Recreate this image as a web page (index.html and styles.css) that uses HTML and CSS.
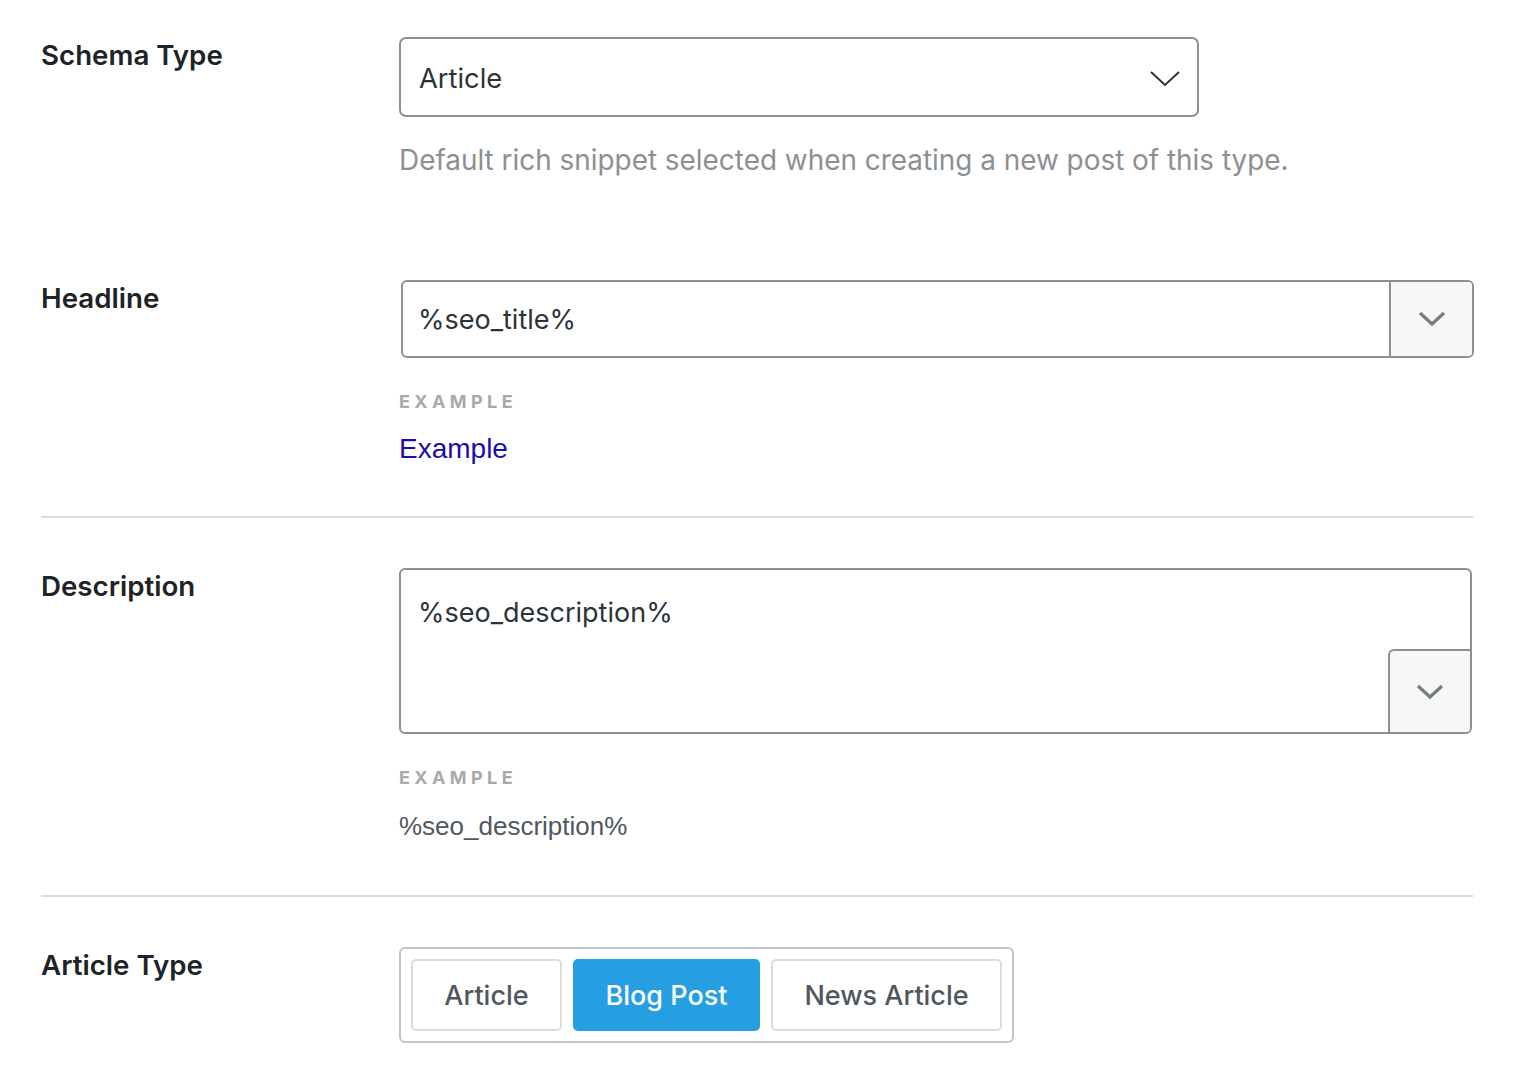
FILE: index.html
```html
<!DOCTYPE html>
<html>
<head>
<meta charset="utf-8">
<link rel="stylesheet" href="styles.css">
</head>
<body>
<div class="page">
  <div class="row row-schema">
    <div class="label">Schema Type</div>
    <div class="control">
      <div class="select">
        <span>Article</span>
        <svg class="chev-thin" width="32" height="18" viewBox="0 0 32 18"><path d="M2 3 L16 16 L30 3" fill="none" stroke="#2c3338" stroke-width="2"/></svg>
      </div>
      <p class="help">Default rich snippet selected when creating a new post of this type.</p>
    </div>
  </div>

  <div class="row row-headline">
    <div class="label">Headline</div>
    <div class="control">
      <div class="input">
        <span class="value">%seo_title%</span>
        <div class="var-btn">
          <svg width="28" height="16" viewBox="0 0 28 16"><path d="M2 2 L14 13 L26 2" fill="none" stroke="#787c82" stroke-width="3.2"/></svg>
        </div>
      </div>
      <div class="ex-label">EXAMPLE</div>
      <div class="ex-link">Example</div>
    </div>
  </div>

  <hr class="divider">

  <div class="row row-desc">
    <div class="label">Description</div>
    <div class="control">
      <div class="textarea">
        <span class="value">%seo_description%</span>
        <div class="var-btn var-btn-corner">
          <svg width="28" height="16" viewBox="0 0 28 16"><path d="M2 2 L14 13 L26 2" fill="none" stroke="#787c82" stroke-width="3.2"/></svg>
        </div>
      </div>
      <div class="ex-label">EXAMPLE</div>
      <div class="ex-text">%seo_description%</div>
    </div>
  </div>

  <hr class="divider">

  <div class="row row-type">
    <div class="label">Article Type</div>
    <div class="control">
      <div class="btn-group">
        <div class="btn btn-article">Article</div>
        <div class="btn btn-blog active">Blog Post</div>
        <div class="btn btn-news">News Article</div>
      </div>
    </div>
  </div>
</div>
</body>
</html>
```

FILE: styles.css
```css
* { box-sizing: border-box; }
html, body { margin: 0; padding: 0; background: #fff; }
body {
  font-family: Inter, "Noto Sans", sans-serif;
  color: #2c3338;
}
.page {
  width: 1473px;
  padding: 37px 0 0 41px;
}
.row {
  display: grid;
  grid-template-columns: 358px 1fr;
}
.label {
  font-size: 27.7px;
  font-weight: 600;
  line-height: 36px;
  color: #1d2327;
}
.control { min-width: 0; }

.select {
  width: 800px;
  height: 80px;
  border: 2px solid #8c8f94;
  border-radius: 7px;
  display: flex;
  align-items: center;
  justify-content: space-between;
  padding: 2px 16px 0 18px;
  font-size: 27.3px;
  color: #2c3338;
}
.help {
  margin: 25px 0 0 0;
  font-size: 27.9px;
  line-height: 36px;
  color: #8c8f94;
}

.row-headline { margin-top: 102px; }
.row-headline .control { padding-left: 2px; }
.input {
  width: 1073px;
  height: 78px;
  border: 2px solid #8c8f94;
  border-radius: 6px;
  display: flex;
  align-items: center;
  overflow: hidden;
}
.input .value {
  flex: 1;
  padding-left: 15px;
  font-size: 27px;
  color: #2c3338;
}
.var-btn {
  width: 83px;
  align-self: stretch;
  border-left: 2px solid #8c8f94;
  background: #f6f7f7;
  display: flex;
  align-items: center;
  justify-content: center;
}
.ex-label {
  margin-top: 33px;
  font-size: 18px;
  font-weight: 700;
  letter-spacing: 4.4px;
  line-height: 22px;
  color: #a7aaad;
}
.row-headline .ex-label { margin-left: -2px; }
.ex-link {
  margin: 18px 0 0 -2px;
  font-family: "Liberation Sans", Arial, sans-serif;
  font-size: 28px;
  line-height: 36px;
  color: #1a0dab;
}

.divider {
  border: 0;
  border-top: 2px solid #dcdcde;
  margin: 0;
  width: 1432px;
}
.row-headline { padding-bottom: 49px; }
.row-desc { margin-top: 50px; padding-bottom: 51px; }
.textarea {
  position: relative;
  width: 1073px;
  height: 166px;
  border: 2px solid #8c8f94;
  border-radius: 6px;
  padding: 25px 0 0 17px;
}
.textarea .value {
  font-size: 27px;
  line-height: 36px;
  color: #2c3338;
}
.var-btn-corner {
  position: absolute;
  right: 0;
  bottom: 0;
  height: 83px;
  width: 82px;
  border-top: 2px solid #8c8f94;
  border-left: 2px solid #8c8f94;
  border-top-left-radius: 6px;
  border-bottom-right-radius: 4px;
}
.row-desc .ex-label { margin-top: 33px; }
.ex-text {
  margin-top: 19px;
  font-family: "Liberation Sans", Arial, sans-serif;
  font-size: 26px;
  line-height: 36px;
  color: #50575e;
}

.row-type { margin-top: 50px; }
.btn-group {
  display: inline-flex;
  gap: 11px;
  padding: 10px;
  border: 2px solid #c3c4c7;
  border-radius: 6px;
}
.btn {
  height: 72px;
  border: 2px solid #dcdcde;
  border-radius: 5px;
  display: flex;
  align-items: center;
  justify-content: center;
  font-size: 27px;
  font-weight: 500;
  color: #50575e;
}
.btn-article { width: 151px; }
.btn-blog { width: 187px; }
.btn-news { width: 231px; }
.btn.active {
  background: #259fe2;
  border-color: #259fe2;
  color: #fff;
}
```
